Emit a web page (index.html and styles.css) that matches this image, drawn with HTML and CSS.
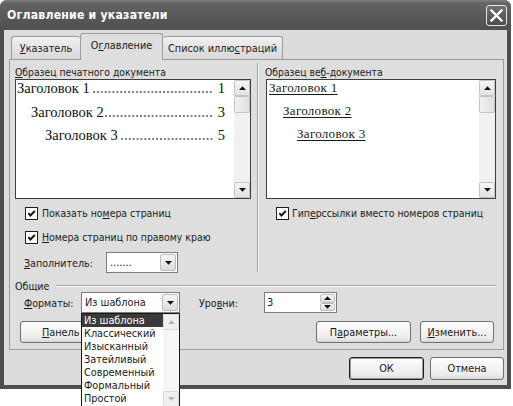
FILE: index.html
```html
<!DOCTYPE html>
<html lang="ru">
<head>
<meta charset="utf-8">
<title>Оглавление и указатели</title>
<link rel="stylesheet" href="styles.css">
</head>
<body>
<div class="window">
  <div class="titlebar">
    <span class="title">Оглавление и указатели</span>
    <button class="close" aria-label="Закрыть">
      <svg width="13" height="13" viewBox="0 0 13 13"><path d="M1.5 1.5 L11.5 11.5 M11.5 1.5 L1.5 11.5" stroke="#fff" stroke-width="2.4" stroke-linecap="square" fill="none"/></svg>
    </button>
  </div>
  <div class="client">
    <div class="tabs">
      <div class="tab t1"><span><u>У</u>казатель</span></div>
      <div class="tab active"><span>О<u>г</u>лавление</span></div>
      <div class="tab t3"><span>Список иллю<u>с</u>траций</span></div>
    </div>
    <div class="panel">
      <div class="top">
        <div class="col left">
          <div class="label"><u>О</u>бразец печатного документа</div>
          <div class="preview">
            <div class="preview-content print">
              <div class="toc l1"><span>Заголовок 1&nbsp;</span><span class="dots"></span><span class="num">1</span></div>
              <div class="toc l2"><span>Заголовок 2</span><span class="dots"></span><span class="num">3</span></div>
              <div class="toc l3"><span>Заголовок 3&nbsp;</span><span class="dots"></span><span class="num">5</span></div>
            </div>
            <div class="vscroll">
              <div class="sbtn"><svg width="7" height="4" viewBox="0 0 7 4"><polygon points="0,4 7,4 3.5,0.3" fill="#111"/></svg></div>
              <div class="thumb"></div>
              <div class="track"></div>
              <div class="sbtn"><svg width="7" height="4" viewBox="0 0 7 4"><polygon points="0,0 7,0 3.5,3.7" fill="#111"/></svg></div>
            </div>
          </div>
          <div class="check">
            <span class="box"><svg width="9" height="9" viewBox="0 0 9 9"><polyline points="1.3,4.2 3.4,6.5 7.8,1.8" stroke="#111" stroke-width="1.9" fill="none"/></svg></span>
            <span>Показать но<u>м</u>ера страниц</span>
          </div>
          <div class="check">
            <span class="box"><svg width="9" height="9" viewBox="0 0 9 9"><polyline points="1.3,4.2 3.4,6.5 7.8,1.8" stroke="#111" stroke-width="1.9" fill="none"/></svg></span>
            <span><u>Н</u>омера страниц по правому краю</span>
          </div>
          <div class="field-row">
            <span class="flabel"><u>З</u>аполнитель:</span>
            <div class="combo leader">
              <span class="combo-text">.......</span>
              <span class="combo-btn"><svg width="7" height="4" viewBox="0 0 7 4"><polygon points="0,0 7,0 3.5,3.7" fill="#111"/></svg></span>
            </div>
          </div>
        </div>
        <div class="sep"></div>
        <div class="col right">
          <div class="label">Образец ве<u>б</u>-документа</div>
          <div class="preview web">
            <div class="preview-content links">
              <div class="link l1">Заголовок 1</div>
              <div class="link l2">Заголовок 2</div>
              <div class="link l3">Заголовок 3</div>
            </div>
            <div class="vscroll">
              <div class="sbtn"><svg width="7" height="4" viewBox="0 0 7 4"><polygon points="0,4 7,4 3.5,0.3" fill="#111"/></svg></div>
              <div class="thumb"></div>
              <div class="track"></div>
              <div class="sbtn"><svg width="7" height="4" viewBox="0 0 7 4"><polygon points="0,0 7,0 3.5,3.7" fill="#111"/></svg></div>
            </div>
          </div>
          <div class="check rcheck">
            <span class="box"><svg width="9" height="9" viewBox="0 0 9 9"><polyline points="1.3,4.2 3.4,6.5 7.8,1.8" stroke="#111" stroke-width="1.9" fill="none"/></svg></span>
            <span>Гип<u>е</u>рссылки вместо номеров страниц</span>
          </div>
        </div>
      </div>
      <div class="group-title"><span>Общие</span><span class="gline"></span></div>
      <div class="formats-row">
        <span class="flabel fl-formats"><u>Ф</u>орматы:</span>
        <div class="combo formats">
          <span class="combo-text">Из шаблона</span>
          <span class="combo-btn"><svg width="7" height="4" viewBox="0 0 7 4"><polygon points="0,0 7,0 3.5,3.7" fill="#111"/></svg></span>
          <div class="dropdown">
            <div class="items">
              <div class="item sel">Из шаблона</div>
              <div class="item">Классический</div>
              <div class="item">Изысканный</div>
              <div class="item">Затейливый</div>
              <div class="item">Современный</div>
              <div class="item">Формальный</div>
              <div class="item">Простой</div>
            </div>
            <div class="lscroll">
              <div class="sbtn dis"><svg width="7" height="4" viewBox="0 0 7 4"><polygon points="0,4 7,4 3.5,0.3" fill="#b4b4b4"/></svg></div>
              <div class="track ltrack"></div>
              <div class="sbtn dis"><svg width="7" height="4" viewBox="0 0 7 4"><polygon points="0,0 7,0 3.5,3.7" fill="#b4b4b4"/></svg></div>
            </div>
          </div>
        </div>
        <span class="flabel fl-levels">Уро<u>в</u>ни:</span>
        <div class="spin">
          <span class="spin-val">3</span>
          <span class="spin-btns">
            <span class="spin-btn"><svg width="7" height="4" viewBox="0 0 7 4"><polygon points="0,4 7,4 3.5,0.3" fill="#111"/></svg></span>
            <span class="spin-btn"><svg width="7" height="4" viewBox="0 0 7 4"><polygon points="0,0 7,0 3.5,3.7" fill="#111"/></svg></span>
          </span>
        </div>
      </div>
      <div class="buttons-row">
        <button class="btn b-panel"><u>П</u>анель</button>
        <span class="spacer"></span>
        <button class="btn b-params">П<u>а</u>раметры...</button>
        <button class="btn b-change"><u>И</u>зменить...</button>
      </div>
    </div>
    <div class="footer">
      <button class="btn b-ok">ОК</button>
      <button class="btn b-cancel">Отмена</button>
    </div>
  </div>
</div>
</body>
</html>
```

FILE: styles.css
```css
* { box-sizing: border-box; }
html, body { margin: 0; padding: 0; }
body {
  width: 513px;
  height: 406px;
  overflow: hidden;
  background: #fff;
  font-family: "DejaVu Sans Condensed", "DejaVu Sans", sans-serif;
  font-stretch: condensed;
  font-size: 10.3px;
  color: #1b1b1b;
}
u { text-decoration: underline; text-underline-offset: 1px; }

.window {
  width: 511px;
  height: 389px;
  background: #4e4e4e;
  border-radius: 7px 7px 0 0;
  padding: 0 4px 4px;
  display: flex;
  flex-direction: column;
}
.titlebar {
  height: 30px;
  margin: 0 -4px;
  padding: 0 4px 0 7px;
  display: flex;
  align-items: center;
  justify-content: space-between;
  background: linear-gradient(#808080 0, #646464 3px, #5a5a5a 45%, #505050 100%);
  border-radius: 7px 7px 0 0;
}
.title {
  color: #fff;
  font-weight: bold;
  font-size: 12.2px;
  letter-spacing: 0.2px;
}
.close {
  width: 21px;
  height: 21px;
  padding: 0;
  border: 1px solid #e6e6e6;
  border-radius: 3px;
  background: linear-gradient(#707070, #4c4c4c);
  display: flex;
  align-items: center;
  justify-content: center;
}

.client {
  flex: 1;
  background: #dcdcdc;
  padding: 3px 3px 5px 5px;
  display: flex;
  flex-direction: column;
}

.tabs {
  display: flex;
  align-items: flex-end;
  height: 26px;
  margin-left: 2px;
  position: relative;
  z-index: 1;
  font-size: 10.8px;
}
.tab {
  height: 23px;
  display: flex;
  align-items: center;
  justify-content: center;
  border: 1px solid #9c9c9c;
  border-bottom: none;
  border-radius: 3px 3px 0 0;
  background: linear-gradient(#f0f0f0, #d8d8d8);
  white-space: nowrap;
}
.tab.t1 { width: 69px; border-right: none; }
.tab.t3 { width: 120px; border-left: none; }
.tab.active {
  width: 83px;
  height: 27px;
  margin-bottom: -1px;
  padding-bottom: 3px;
  background: #dedede;
}

.panel {
  height: 291px;
  border: 1px solid #9c9c9c;
  background: #dedede;
  padding: 3px 7px 6px 5px;
  display: flex;
  flex-direction: column;
}
.top {
  display: grid;
  grid-template-columns: 236px 14px 1fr;
  height: 210px;
}
.col { display: flex; flex-direction: column; min-width: 0; }
.sep {
  width: 2px;
  margin-left: 6px;
  height: 209px;
  border-left: 1px solid #a2a2a2;
  border-right: 1px solid #fafafa;
}
.label { margin-top: 3px; height: 13px; line-height: 13px; white-space: nowrap; }
.preview {
  height: 120px;
  border: 1px solid #3e3e3e;
  background: #fff;
  display: flex;
}
.web { margin-left: 1px; }
.preview-content {
  flex: 1;
  display: flex;
  flex-direction: column;
  min-width: 0;
}
.print {
  gap: 7.5px;
  padding: 0 9px 0 1px;
  font-family: "Liberation Serif", "Times New Roman", serif;
  font-stretch: normal;
  font-size: 14.5px;
  color: #111;
}
.toc {
  display: flex;
  align-items: baseline;
  height: 16px;
  line-height: 16px;
  white-space: nowrap;
}
.toc.l2 { padding-left: 14px; }
.toc.l3 { padding-left: 28px; }
.dots {
  flex: 1;
  height: 2px;
  margin-right: 5px;
  background-image: radial-gradient(circle at 1px 1px, #333 0.55px, transparent 0.95px);
  background-size: 3.9px 2px;
  background-repeat: repeat-x;
}
.toc.l2 .dots { margin-left: 1px; }
.num { flex: none; }
.links {
  gap: 7px;
  padding-left: 2px;
  font-family: "Liberation Serif", "Times New Roman", serif;
  font-stretch: normal;
  font-size: 13px;
  color: #1a1a1a;
}
.link {
  height: 16px;
  line-height: 15px;
  text-decoration: underline;
  text-underline-offset: 2px;
  letter-spacing: 0.3px;
}
.link.l2 { padding-left: 14px; }
.link.l3 { padding-left: 28px; }

.vscroll, .lscroll {
  width: 16px;
  flex: none;
  display: flex;
  flex-direction: column;
  background: #f1f1f1;
}
.sbtn {
  width: 16px;
  height: 16px;
  flex: none;
  display: flex;
  align-items: center;
  justify-content: center;
  background: linear-gradient(#f6f6f6, #e2e2e2);
  border: 1px solid #c4c4c4;
  border-radius: 2px;
}
.sbtn.dis { background: #efefef; border-color: #dadada; }
.thumb {
  height: 17px;
  flex: none;
  background: linear-gradient(90deg, #f2f2f2, #e0e0e0);
  border: 1px solid #c4c4c4;
  border-radius: 2px;
}
.track { flex: 1; }
.ltrack { background: #f6f6f6; }

.check {
  display: flex;
  align-items: center;
  height: 24px;
  padding-left: 10px;
  gap: 4px;
  white-space: nowrap;
  font-size: 10.4px;
}
.preview + .check { margin-top: 2px; }
.rcheck { padding-left: 11px; gap: 3px; }
.box {
  width: 13px;
  height: 13px;
  flex: none;
  border: 1px solid #1e1e1e;
  background: #fff;
  display: flex;
  align-items: center;
  justify-content: center;
}

.field-row {
  display: flex;
  align-items: center;
  margin-top: 3px;
  padding-left: 9px;
}
.flabel { display: inline-block; white-space: nowrap; font-size: 10.6px; }
.field-row .flabel { width: 82px; }

.combo {
  display: flex;
  height: 21px;
  border: 1px solid #7c7c7c;
  background: #fff;
  position: relative;
  font-size: 10.8px;
}
.combo-text {
  flex: 1;
  padding-left: 3px;
  line-height: 19px;
  white-space: nowrap;
}
.combo-btn {
  width: 16px;
  margin: 1px;
  display: flex;
  align-items: center;
  justify-content: center;
  background: linear-gradient(#f6f6f6, #dcdcdc);
  border: 1px solid #bdbdbd;
  border-radius: 2px;
}
.leader { width: 72px; }
.formats { width: 99px; }

.group-title {
  display: flex;
  align-items: center;
  gap: 7px;
  height: 13px;
  margin-top: 6px;
  font-size: 10.6px;
}
.gline {
  flex: 1;
  height: 2px;
  border-top: 1px solid #a8a8a8;
  border-bottom: 1px solid #fafafa;
}

.formats-row {
  display: flex;
  align-items: center;
  height: 21px;
  padding-left: 9px;
}
.fl-formats { width: 57px; }
.fl-levels { width: 65px; margin-left: 19px; }

.spin {
  display: flex;
  width: 73px;
  height: 21px;
  border: 1px solid #7c7c7c;
  background: #fff;
  font-size: 11px;
}
.spin-val { flex: 1; padding-left: 2px; line-height: 19px; }
.spin-btns {
  width: 17px;
  padding: 1px;
  display: flex;
  flex-direction: column;
}
.spin-btn {
  flex: 1;
  display: flex;
  align-items: center;
  justify-content: center;
  background: linear-gradient(#f6f6f6, #dcdcdc);
  border: 1px solid #bdbdbd;
  border-radius: 2px;
}

.dropdown {
  position: absolute;
  left: -1px;
  top: 20px;
  width: 99px;
  height: 95px;
  border: 1px solid #1a1a1a;
  background: #fff;
  display: flex;
  z-index: 5;
}
.items { flex: 1; display: flex; flex-direction: column; min-width: 0; }
.item {
  height: 13px;
  line-height: 13px;
  padding-left: 2px;
  white-space: nowrap;
  color: #1b1b1b;
}
.item.sel { background: #3a3a3a; color: #fff; }
.lscroll { background: #f6f6f6; }

.buttons-row {
  display: flex;
  align-items: center;
  margin-top: 8px;
  height: 22px;
  padding-left: 5px;
  padding-right: 2px;
  gap: 9px;
}
.spacer { flex: 1; }
.btn {
  height: 22px;
  padding: 0;
  font-family: inherit;
  font-stretch: inherit;
  font-size: 10.8px;
  color: #1b1b1b;
  border: 1px solid #707070;
  border-radius: 3px;
  background: linear-gradient(#fdfdfd, #ececec 80%, #d8d8d8);
  white-space: nowrap;
  overflow: hidden;
}
.b-panel { width: 150px; text-align: left; padding-left: 21px; }
.b-params { width: 95px; }
.b-change { width: 74px; }

.footer {
  display: flex;
  justify-content: flex-end;
  gap: 6px;
  margin-top: 7px;
}
.footer .btn { height: 23px; }
.b-ok { width: 75px; border-color: #1e1e1e; box-shadow: inset 0 0 0 1px #9a9a9a; }
.b-cancel { width: 74px; }
```
